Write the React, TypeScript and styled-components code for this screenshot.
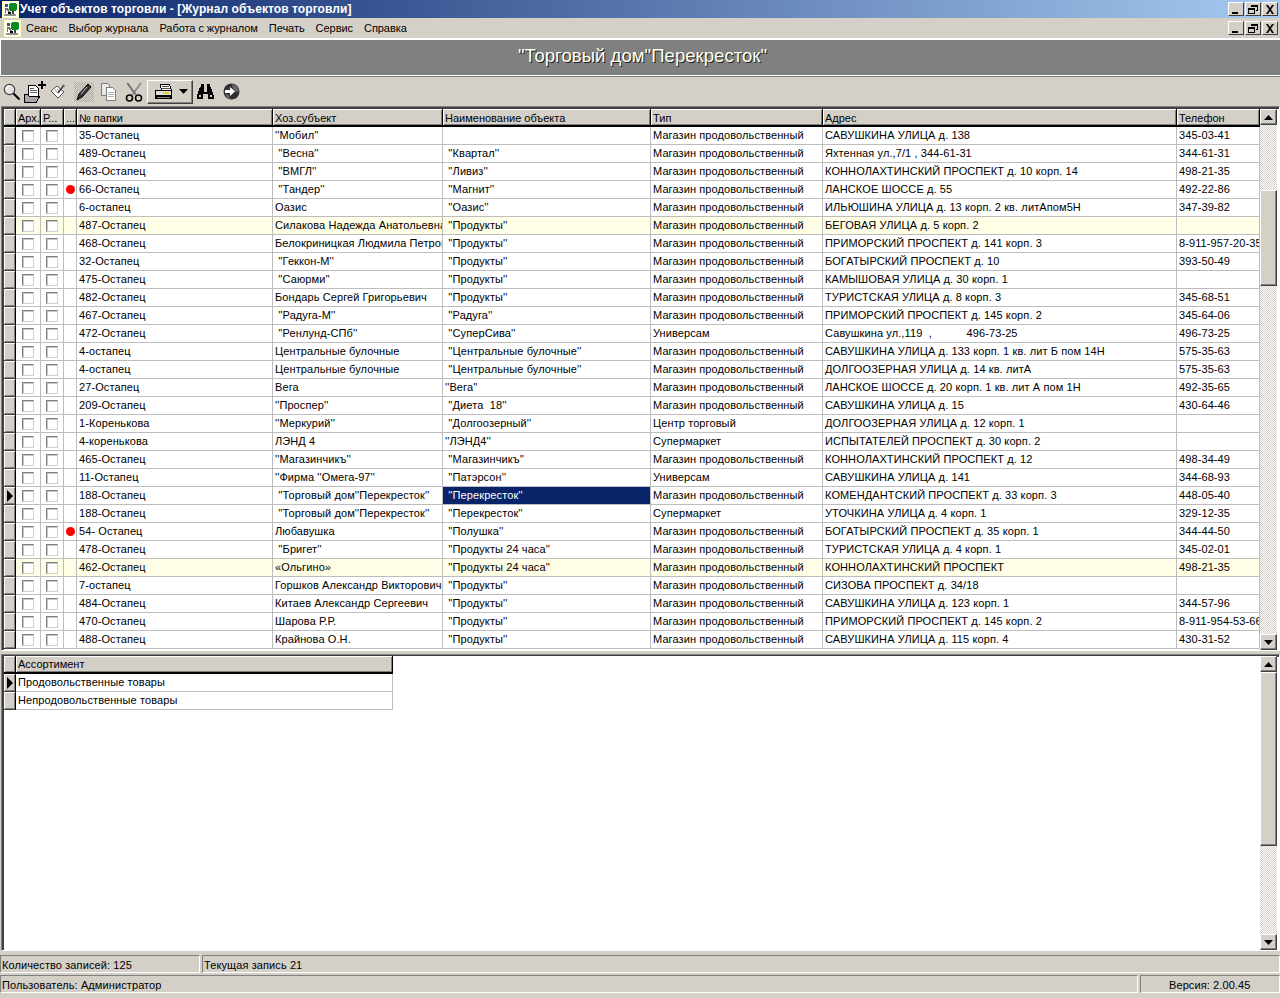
import React from "react";
import styled, { createGlobalStyle } from "styled-components";

const GlobalStyle = createGlobalStyle`
  html, body {
    margin: 0;
    padding: 0;
    background: #d4d0c8;
  }
  body {
    font-family: "Liberation Sans", Arial, sans-serif;
    font-size: 11px;
    color: #000;
    overflow: hidden;
  }
`;

const Window = styled.div`
  width: 1280px;
  height: 998px;
  display: flex;
  flex-direction: column;
  background: #d4d0c8;
  overflow: hidden;
`;

const TitleBar = styled.div`
  height: 18px;
  flex: none;
  display: flex;
  align-items: center;
  padding: 0 2px;
  background: linear-gradient(90deg, #0a246a 0%, #a6caf0 100%);
`;

const TitleText = styled.div`
  flex: 1;
  margin-left: 1px;
  color: #fff;
  font-weight: 700;
  font-size: 12px;
  letter-spacing: 0.08px;
  white-space: pre;
`;

const MenuBar = styled.div`
  height: 20px;
  flex: none;
  display: flex;
  align-items: center;
  padding: 0 2px 0 4px;
`;

const MenuItems = styled.div`
  flex: 1;
  display: flex;
  gap: 11px;
  margin-left: 5px;
  font-size: 11px;
  letter-spacing: -0.05px;
`;

const WinButtons = styled.div`
  display: flex;
  gap: 1px;
`;

const WinButton = styled.div`
  width: 16px;
  height: 14px;
  box-sizing: border-box;
  background: #d4d0c8;
  border: 1px solid;
  border-color: #fff #404040 #404040 #fff;
  display: flex;
  align-items: center;
  justify-content: center;
`;

const Band = styled.div`
  height: 38px;
  flex: none;
  box-sizing: border-box;
  background: #808080;
  border-top: 2px solid #fff;
  border-bottom: 1px solid #fff;
  border-left: 1px solid #fff;
  display: flex;
  align-items: center;
  justify-content: center;
  padding: 0 0 3px 4px;
  color: #fffff0;
  font-size: 18.6px;
  text-shadow: 1px 1px 0 #202020;
`;

const Toolbar = styled.div`
  height: 30px;
  flex: none;
  box-sizing: border-box;
  border-top: 1px solid #808080;
  display: flex;
  align-items: center;
  padding-left: 2px;
`;

const ToolSlot = styled.div<{ $w: number; $ml?: number; $pressed?: boolean }>`
  width: ${(p) => p.$w}px;
  height: 20px;
  flex: none;
  margin-left: ${(p) => p.$ml ?? 0}px;
  display: flex;
  align-items: center;
  justify-content: center;
  background: ${(p) =>
    p.$pressed
      ? "repeating-conic-gradient(#b4b2ac 0 25%, #d4d0c8 0 50%) 0 0/2px 2px"
      : "transparent"};
`;

const PrintButton = styled.div`
  width: 46px;
  height: 24px;
  flex: none;
  margin-left: 3px;
  box-sizing: border-box;
  border: 1px solid;
  border-color: #fff #404040 #404040 #fff;
  box-shadow: inset -1px -1px 0 #808080;
  display: flex;
  align-items: center;
  gap: 6px;
  padding-left: 7px;
`;

const Sunken = styled.div`
  display: flex;
  flex: none;
  box-sizing: border-box;
  background: #fff;
  border: 1px solid;
  border-color: #808080 #fff #fff #808080;
  box-shadow: inset 2px 2px 0 #404040;
  margin-left: 1px;
`;

const UpperPane = styled(Sunken)`
  height: 545px;
  padding: 2px 0 0 2px;
`;

const LowerPane = styled(Sunken)`
  height: 297px;
  margin-top: 3px;
  padding: 1px 0 0 2px;
`;

const GridArea = styled.div`
  width: 1256px;
  flex: none;
`;

const Row = styled.div<{ $cols: string; $tint?: boolean }>`
  display: grid;
  grid-template-columns: ${(p) => p.$cols};
  height: 18px;
  background: ${(p) => (p.$tint ? "#ffffe8" : "#fff")};
`;

const HeadCell = styled.div<{ $top?: number }>`
  box-sizing: border-box;
  height: 18px;
  padding: ${(p) => p.$top ?? 2}px 0 0 2px;
  background: #d4d0c8;
  border-right: 1px solid #000;
  border-bottom: 2px solid #000;
  box-shadow: inset 1px 1px 0 #fff, inset -1px -1px 0 #808080;
  font-size: 11px;
  line-height: 14px;
  white-space: nowrap;
  overflow: hidden;
`;

const Indicator = styled.div`
  box-sizing: border-box;
  height: 18px;
  background: #d4d0c8;
  border-right: 1px solid #000;
  border-bottom: 1px solid #404040;
  box-shadow: inset 1px 1px 0 #fff, inset -1px -1px 0 #808080;
  display: flex;
  align-items: center;
  justify-content: center;
`;

const Cell = styled.div<{ $selected?: boolean }>`
  box-sizing: border-box;
  height: 18px;
  padding-left: 2px;
  border-right: 1px solid #bdbdbd;
  border-bottom: 1px solid #bdbdbd;
  background: ${(p) => (p.$selected ? "#0a246a" : "transparent")};
  color: ${(p) => (p.$selected ? "#fff" : "#000")};
  font-size: 11px;
  letter-spacing: 0.1px;
  line-height: 17px;
  white-space: pre;
  overflow: hidden;
`;

const MarkCell = styled(Cell)`
  padding: 0;
  display: flex;
  align-items: center;
  justify-content: center;
`;

const CheckBox = styled.div`
  width: 12px;
  height: 12px;
  box-sizing: border-box;
  background: #fff;
  border: 1px solid;
  border-color: #808080 #d4d0c8 #d4d0c8 #808080;
  box-shadow: inset 1px 1px 0 #c8c8c8;
`;

const RedDot = styled.div`
  width: 9px;
  height: 9px;
  border-radius: 50%;
  background: #f00;
`;

const ScrollBar = styled.div`
  width: 17px;
  flex: none;
  display: flex;
  flex-direction: column;
  align-self: stretch;
  margin-right: 2px;
`;

const ScrollButton = styled.div`
  height: 16px;
  flex: none;
  box-sizing: border-box;
  background: #d4d0c8;
  border: 1px solid;
  border-color: #fff #404040 #404040 #fff;
  box-shadow: inset -1px -1px 0 #808080;
  display: flex;
  align-items: center;
  justify-content: center;
`;

const ScrollTrack = styled.div<{ $top: number }>`
  flex: 1;
  padding-top: ${(p) => p.$top}px;
  background: repeating-conic-gradient(#d4d0c8 0 25%, #fff 0 50%) 0 0/2px 2px;
`;

const ScrollThumb = styled.div<{ $h: number }>`
  height: ${(p) => p.$h}px;
  box-sizing: border-box;
  background: #d4d0c8;
  border: 1px solid;
  border-color: #fff #404040 #404040 #fff;
  box-shadow: inset -1px -1px 0 #808080;
`;

const StatusArea = styled.div`
  display: flex;
  flex-direction: column;
  gap: 2px;
  margin-top: 4px;
`;

const StatusRow = styled.div`
  display: flex;
  flex: none;
  gap: 2px;
`;

const StatusPanel = styled.div<{ $w?: number; $right?: boolean }>`
  box-sizing: border-box;
  ${(p) => (p.$w ? `width: ${p.$w}px; flex: none;` : "flex: 1;")}
  height: 18px;
  padding-left: ${(p) => (p.$right ? "28px" : "1px")};
  border: 1px solid;
  border-color: #808080 #fff #fff #808080;
  font-size: 11px;
  letter-spacing: 0.1px;
  line-height: 19px;
  white-space: pre;
`;

const Tree = () => (
  <svg width="17" height="17" viewBox="0 0 17 17" shapeRendering="crispEdges">
    <rect width="17" height="17" fill="#ffffb8" />
    <rect x="1" y="1" width="15" height="15" fill="#fff" />
    <circle cx="11" cy="6" r="4.5" fill="#0a8a20" />
    <rect x="10" y="10" width="2" height="4" fill="#404040" />
    <rect x="3" y="3" width="3" height="3" fill="#505050" />
    <path d="M3 7h3l3 5h-2l-3-3v3H3z" fill="#707070" />
    <rect x="2" y="13" width="12" height="2" fill="#909090" />
    <rect x="6" y="11" width="3" height="2" fill="#000" />
  </svg>
);

const MinIcon = () => (
  <svg width="10" height="9" viewBox="0 0 10 9" shapeRendering="crispEdges">
    <rect x="1" y="7" width="6" height="2" fill="#000" />
  </svg>
);
const RestoreIcon = () => (
  <svg width="10" height="9" viewBox="0 0 10 9" shapeRendering="crispEdges" fill="none" stroke="#000">
    <path d="M3.5 2V.5h6v5H8" />
    <path d="M3.5 1.500h6" />
    <rect x=".5" y="3.500" width="6" height="5" fill="#d4d0c8" />
    <path d="M.5 4.500h6" />
  </svg>
);
const CloseIcon = () => (
  <svg width="10" height="9" viewBox="0 0 10 9" fill="#000">
    <path d="M1 0h2l2 3 2-3h2L6 4.500 9 9H7L5 6 3 9H1l3-4.500z" />
  </svg>
);

const Controls = () => (
  <WinButtons>
    <WinButton><MinIcon /></WinButton>
    <WinButton><RestoreIcon /></WinButton>
    <WinButton><CloseIcon /></WinButton>
  </WinButtons>
);

const UpArrow = () => (
  <svg width="9" height="5" viewBox="0 0 9 5"><path d="M4.500 0L9 5H0z" fill="#000" /></svg>
);
const DownArrow = () => (
  <svg width="9" height="5" viewBox="0 0 9 5"><path d="M0 0h9L4.500 5z" fill="#000" /></svg>
);
const RowArrow = () => (
  <svg width="6" height="12" viewBox="0 0 6 12"><path d="M0 0l6 6-6 6z" fill="#000" /></svg>
);

const Magnifier = () => (
  <svg width="17" height="17" viewBox="0 0 17 17">
    <circle cx="6.500" cy="6.500" r="5.200" fill="#e4e4e4" stroke="#404040" strokeWidth="1.200" />
    <path d="M3.500 6a3 3 0 0 1 3-3" stroke="#fff" strokeWidth="1.500" fill="none" />
    <path d="M10.500 10.500l6 6" stroke="#000" strokeWidth="2" />
  </svg>
);

const NewDoc = () => (
  <svg width="22" height="22" viewBox="0 0 22 22" shapeRendering="crispEdges">
    <path d="M4.500 4.500h7l3 3v8h-10z" fill="#fff" stroke="#000" />
    <path d="M6 7h4M6 9h7M6 11h7" stroke="#606060" />
    <path d="M.5 13.500h3l2 2h10l-3 5.500h-12z" fill="#a8a8a8" stroke="#000" />
    <path d="M17 0h2v3h3v2h-3v3h-2V5h-3V3h3z" fill="#000" />
  </svg>
);

const CheckDoc = () => (
  <svg width="17" height="17" viewBox="0 0 17 17">
    <path d="M1 8l6-5 7 6-6 6z" fill="#fff" stroke="#505050" />
    <path d="M5 7l3 3M7 6l3 3" stroke="#909090" />
    <path d="M8 10l6-8" stroke="#303030" strokeWidth="1.300" />
    <path d="M12 2l3 2" stroke="#808080" />
  </svg>
);

const PenIcon = () => (
  <svg width="18" height="20" viewBox="0 0 18 20">
    <path d="M2 18l2-6 9-10 3 3-9 10z" fill="#383838" stroke="#000" />
    <path d="M6 12l6-7" stroke="#c8c8c8" />
  </svg>
);

const CopyIcon = () => (
  <svg width="16" height="18" viewBox="0 0 16 18" shapeRendering="crispEdges">
    <path d="M.5 .5h6l2 2v10h-8z" fill="#e8e8e8" stroke="#808080" />
    <path d="M5.500 4.500h6l3 3v9.500h-9z" fill="#fff" stroke="#808080" />
    <path d="M7 9h6M7 11h6M7 13h6" stroke="#b0b0b0" />
  </svg>
);

const Scissors = () => (
  <svg width="18" height="20" viewBox="0 0 18 20">
    <path d="M2 1l9 12M16 1l-9 12" stroke="#909090" strokeWidth="2" />
    <path d="M2.500 1l8 11" stroke="#505050" />
    <circle cx="4.500" cy="16" r="3" fill="none" stroke="#000" strokeWidth="1.500" />
    <circle cx="13.500" cy="16" r="3" fill="none" stroke="#000" strokeWidth="1.500" />
  </svg>
);

const Printer = () => (
  <svg width="18" height="15" viewBox="0 0 18 15" shapeRendering="crispEdges">
    <path d="M5.500 .5h9l2 6h-10z" fill="#fff" stroke="#000" />
    <path d="M7 2h7M7 4h8" stroke="#505050" />
    <path d="M.5 6.500h16v5h-16z" fill="#e0e0e0" stroke="#000" />
    <path d="M8 9h6" stroke="#e8d020" strokeWidth="2" />
    <path d="M0 12h17v3H0z" fill="#000" />
    <path d="M2 13h13" stroke="#808080" />
  </svg>
);

const Caret = () => (
  <svg width="9" height="5" viewBox="0 0 9 5"><path d="M0 0h9L4.500 5z" fill="#000" /></svg>
);

const Binoculars = () => (
  <svg width="17" height="15" viewBox="0 0 17 15" shapeRendering="crispEdges" fill="#000">
    <rect x="4" y="0" width="3" height="4" />
    <rect x="10" y="0" width="3" height="4" />
    <path d="M3 3h4v5h3V3h4l3 9v3h-6V10H6v5H0v-3z" />
    <rect x="2" y="11" width="2" height="2" fill="#d4d0c8" />
    <rect x="13" y="11" width="2" height="2" fill="#d4d0c8" />
  </svg>
);

const Globe = () => (
  <svg width="17" height="17" viewBox="0 0 17 17">
    <circle cx="8.500" cy="8.500" r="8" fill="#303030" />
    <path d="M9 1l5 2 2 5-3 1-3-3zM2 11l4 1 1 4-3-1z" fill="#686868" />
    <path d="M2 7h5V4l5 4.500-5 4.500v-3H2z" fill="#fff" />
  </svg>
);

const MAIN_COLS = "12px 25px 23px 13px 196px 170px 208px 172px 354px 83px";
const SUB_COLS = "12px 377px";

const HEADERS = ["Арх.", "Р...", "...", "№ папки", "Хоз.субъект", "Наименование объекта", "Тип", "Адрес", "Телефон"];

const SHOP = "Магазин продовольственный";

type Rec = {
  dot?: boolean;
  tint?: boolean;
  current?: boolean;
  cells: [string, string, string, string, string, string];
};

const RECORDS: Rec[] = [
  { cells: ["35-Остапец", "''Мобил''", "", SHOP, "САВУШКИНА УЛИЦА д. 138", "345-03-41"] },
  { cells: ["489-Остапец", " ''Весна''", " ''Квартал''", SHOP, "Яхтенная ул.,7/1 , 344-61-31", "344-61-31"] },
  { cells: ["463-Остапец", " ''ВМГЛ''", " ''Ливиз''", SHOP, "КОННОЛАХТИНСКИЙ ПРОСПЕКТ д. 10 корп. 14", "498-21-35"] },
  { dot: true, cells: ["66-Остапец", " ''Тандер''", " ''Магнит''", SHOP, "ЛАНСКОЕ ШОССЕ д. 55", "492-22-86"] },
  { cells: ["6-остапец", "Оазис", " ''Оазис''", SHOP, "ИЛЬЮШИНА УЛИЦА д. 13 корп. 2 кв. литАпом5Н", "347-39-82"] },
  { tint: true, cells: ["487-Остапец", "Силакова Надежда Анатольевна", " ''Продукты''", SHOP, "БЕГОВАЯ УЛИЦА д. 5 корп. 2", ""] },
  { cells: ["468-Остапец", "Белокриницкая Людмила Петровна", " ''Продукты''", SHOP, "ПРИМОРСКИЙ ПРОСПЕКТ д. 141 корп. 3", "8-911-957-20-35"] },
  { cells: ["32-Остапец", " ''Геккон-М''", " ''Продукты''", SHOP, "БОГАТЫРСКИЙ ПРОСПЕКТ д. 10", "393-50-49"] },
  { cells: ["475-Остапец", " ''Саюрми''", " ''Продукты''", SHOP, "КАМЫШОВАЯ УЛИЦА д. 30 корп. 1", ""] },
  { cells: ["482-Остапец", "Бондарь Сергей Григорьевич", " ''Продукты''", SHOP, "ТУРИСТСКАЯ УЛИЦА д. 8 корп. 3", "345-68-51"] },
  { cells: ["467-Остапец", " ''Радуга-М''", " ''Радуга''", SHOP, "ПРИМОРСКИЙ ПРОСПЕКТ д. 145 корп. 2", "345-64-06"] },
  { cells: ["472-Остапец", " ''Ренлунд-СПб''", " ''СуперСива''", "Универсам", "Савушкина ул.,119  ,           496-73-25", "496-73-25"] },
  { cells: ["4-остапец", "Центральные булочные", " ''Центральные булочные''", SHOP, "САВУШКИНА УЛИЦА д. 133 корп. 1 кв. лит Б пом 14Н", "575-35-63"] },
  { cells: ["4-остапец", "Центральные булочные", " ''Центральные булочные''", SHOP, "ДОЛГООЗЕРНАЯ УЛИЦА д. 14 кв. литА", "575-35-63"] },
  { cells: ["27-Остапец", "Вега", "''Вега''", SHOP, "ЛАНСКОЕ ШОССЕ д. 20 корп. 1 кв. лит А пом 1Н", "492-35-65"] },
  { cells: ["209-Остапец", "''Проспер''", " ''Диета  18''", SHOP, "САВУШКИНА УЛИЦА д. 15", "430-64-46"] },
  { cells: ["1-Коренькова", "''Меркурий''", " ''Долгоозерный''", "Центр торговый", "ДОЛГООЗЕРНАЯ УЛИЦА д. 12 корп. 1", ""] },
  { cells: ["4-коренькова", "ЛЭНД 4", "''ЛЭНД4''", "Супермаркет", "ИСПЫТАТЕЛЕЙ ПРОСПЕКТ д. 30 корп. 2", ""] },
  { cells: ["465-Остапец", "''Магазинчикъ''", " ''Магазинчикъ''", SHOP, "КОННОЛАХТИНСКИЙ ПРОСПЕКТ д. 12", "498-34-49"] },
  { cells: ["11-Остапец", "''Фирма ''Омега-97''", " ''Патэрсон''", "Универсам", "САВУШКИНА УЛИЦА д. 141", "344-68-93"] },
  { current: true, cells: ["188-Остапец", " ''Торговый дом''Перекресток''", " ''Перекресток''", SHOP, "КОМЕНДАНТСКИЙ ПРОСПЕКТ д. 33 корп. 3", "448-05-40"] },
  { cells: ["188-Остапец", " ''Торговый дом''Перекресток''", " ''Перекресток''", "Супермаркет", "УТОЧКИНА УЛИЦА д. 4 корп. 1", "329-12-35"] },
  { dot: true, cells: ["54- Остапец", "Любавушка", " ''Полушка''", SHOP, "БОГАТЫРСКИЙ ПРОСПЕКТ д. 35 корп. 1", "344-44-50"] },
  { cells: ["478-Остапец", " ''Бригет''", " ''Продукты 24 часа''", SHOP, "ТУРИСТСКАЯ УЛИЦА д. 4 корп. 1", "345-02-01"] },
  { tint: true, cells: ["462-Остапец", "«Ольгино»", " ''Продукты 24 часа''", SHOP, "КОННОЛАХТИНСКИЙ ПРОСПЕКТ", "498-21-35"] },
  { cells: ["7-остапец", "Горшков Александр Викторович", " ''Продукты''", SHOP, "СИЗОВА ПРОСПЕКТ д. 34/18", ""] },
  { cells: ["484-Остапец", "Китаев Александр Сергеевич", " ''Продукты''", SHOP, "САВУШКИНА УЛИЦА д. 123 корп. 1", "344-57-96"] },
  { cells: ["470-Остапец", "Шарова Р.Р.", " ''Продукты''", SHOP, "ПРИМОРСКИЙ ПРОСПЕКТ д. 145 корп. 2", "8-911-954-53-66"] },
  { cells: ["488-Остапец", "Крайнова О.Н.", " ''Продукты''", SHOP, "САВУШКИНА УЛИЦА д. 115 корп. 4", "430-31-52"] },
];

const Scroll = ({ top, thumb }: { top: number; thumb: number }) => (
  <ScrollBar>
    <ScrollButton><UpArrow /></ScrollButton>
    <ScrollTrack $top={top}><ScrollThumb $h={thumb} /></ScrollTrack>
    <ScrollButton><DownArrow /></ScrollButton>
  </ScrollBar>
);

export default function App() {
  return (
    <Window>
      <GlobalStyle />
      <TitleBar>
        <Tree />
        <TitleText>Учет объектов торговли - [Журнал объектов торговли]</TitleText>
        <Controls />
      </TitleBar>
      <MenuBar>
        <Tree />
        <MenuItems>
          <span>Сеанс</span>
          <span>Выбор журнала</span>
          <span>Работа с журналом</span>
          <span>Печать</span>
          <span>Сервис</span>
          <span>Справка</span>
        </MenuItems>
        <Controls />
      </MenuBar>
      <Band>"Торговый дом"Перекресток"</Band>
      <Toolbar>
        <ToolSlot $w={19}><Magnifier /></ToolSlot>
        <ToolSlot $w={27}><NewDoc /></ToolSlot>
        <ToolSlot $w={20}><CheckDoc /></ToolSlot>
        <ToolSlot $w={20} $ml={6} $pressed><PenIcon /></ToolSlot>
        <ToolSlot $w={30}><CopyIcon /></ToolSlot>
        <ToolSlot $w={20}><Scissors /></ToolSlot>
        <PrintButton><Printer /><Caret /></PrintButton>
        <ToolSlot $w={25}><Binoculars /></ToolSlot>
        <ToolSlot $w={26}><Globe /></ToolSlot>
      </Toolbar>
      <UpperPane>
        <GridArea>
          <Row $cols={MAIN_COLS}>
            <HeadCell />
            {HEADERS.map((h) => (
              <HeadCell key={h}>{h}</HeadCell>
            ))}
          </Row>
          {RECORDS.map((r, i) => (
            <Row key={i} $cols={MAIN_COLS} $tint={r.tint}>
              <Indicator>{r.current && <RowArrow />}</Indicator>
              <MarkCell><CheckBox /></MarkCell>
              <MarkCell><CheckBox /></MarkCell>
              <MarkCell>{r.dot && <RedDot />}</MarkCell>
              {r.cells.map((c, j) => (
                <Cell key={j} $selected={r.current && j === 2}>{c}</Cell>
              ))}
            </Row>
          ))}
        </GridArea>
        <Scroll top={65} thumb={96} />
      </UpperPane>
      <LowerPane>
        <GridArea>
          <Row $cols={SUB_COLS}>
            <HeadCell />
            <HeadCell $top={1}>Ассортимент</HeadCell>
          </Row>
          <Row $cols={SUB_COLS}>
            <Indicator><RowArrow /></Indicator>
            <Cell>Продовольственные товары</Cell>
          </Row>
          <Row $cols={SUB_COLS}>
            <Indicator />
            <Cell>Непродовольственные товары</Cell>
          </Row>
        </GridArea>
        <Scroll top={0} thumb={174} />
      </LowerPane>
      <StatusArea>
        <StatusRow>
          <StatusPanel $w={200}>Количество записей: 125</StatusPanel>
          <StatusPanel>Текущая запись 21</StatusPanel>
        </StatusRow>
        <StatusRow>
          <StatusPanel>Пользователь: Администратор</StatusPanel>
          <StatusPanel $w={140} $right>Версия: 2.00.45</StatusPanel>
        </StatusRow>
      </StatusArea>
    </Window>
  );
}
